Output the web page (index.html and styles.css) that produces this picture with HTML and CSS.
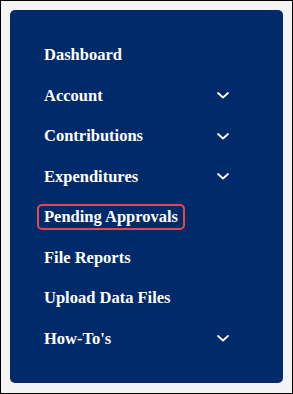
FILE: index.html
```html
<!DOCTYPE html>
<html lang="en">
<head>
  <meta charset="UTF-8" />
  <title>Side Navigation</title>
  <meta name="viewport" content="width=device-width, initial-scale=1" />
  <link rel="stylesheet" href="styles.css">
</head>
<body>

  <div class="frame">
    <!-- SIDE NAV -->
    <nav class="side-nav">
      <ul class="nav-list">
        <li class="nav-item"><a href="#">Dashboard</a></li>
        <li class="nav-item">
          <a href="#">Account</a>
          <button class="toggle" aria-label="Expand Account">
            <svg width="12" height="7" viewBox="0 0 12 7"><path d="M1 1l5 4.5L11 1" /></svg>
          </button>
        </li>
        <li class="nav-item">
          <a href="#">Contributions</a>
          <button class="toggle" aria-label="Expand Contributions">
            <svg width="12" height="7" viewBox="0 0 12 7"><path d="M1 1l5 4.5L11 1" /></svg>
          </button>
        </li>
        <li class="nav-item">
          <a href="#">Expenditures</a>
          <button class="toggle" aria-label="Expand Expenditures">
            <svg width="12" height="7" viewBox="0 0 12 7"><path d="M1 1l5 4.5L11 1" /></svg>
          </button>
        </li>
        <li class="nav-item"><a href="#" class="active">Pending Approvals</a></li>
        <li class="nav-item"><a href="#">File Reports</a></li>
        <li class="nav-item"><a href="#">Upload Data Files</a></li>
        <li class="nav-item">
          <a href="#">How-To's</a>
          <button class="toggle" aria-label="Expand How-To's">
            <svg width="12" height="7" viewBox="0 0 12 7"><path d="M1 1l5 4.5L11 1" /></svg>
          </button>
        </li>
      </ul>
    </nav>
  </div>

</body>
</html>
```

FILE: styles.css
```css
* {
  box-sizing: border-box;
}

body, html {
  margin: 0;
  padding: 0;
  background: #f3f3f3;
}

/* OUTER FRAME */
.frame {
  width: 293px;
  height: 394px;
  border: 1px solid #000;
  padding: 9px 9px 10px 9px;
  background: #f4f4f4;
}

/* SIDE NAV */
.side-nav {
  height: 100%;
  background-color: #012a6a;
  border-radius: 5px;
  padding: 32px 54px 0 27px;
}

.nav-list {
  list-style: none;
  margin: 0;
  padding: 0;
  display: flex;
  flex-direction: column;
  gap: 14.5px;
}

.nav-item {
  display: flex;
  justify-content: space-between;
  align-items: center;
  height: 26px;
}

.nav-item a {
  display: inline-block;
  padding: 2px 5px 3px 5px;
  border: 2px solid transparent;
  border-radius: 5px;
  color: #ffffff;
  text-decoration: none;
  font-family: "Liberation Serif", "Times New Roman", serif;
  font-weight: bold;
  font-size: 16.5px;
  line-height: 17px;
}

.nav-item a.active {
  border-color: #e8464f;
}

.toggle {
  background: none;
  border: none;
  padding: 0;
  margin: 0;
  width: 12px;
  height: 7px;
  display: flex;
  cursor: pointer;
}

.toggle path {
  fill: none;
  stroke: #ffffff;
  stroke-width: 1.8;
  stroke-linecap: round;
  stroke-linejoin: round;
}
```
